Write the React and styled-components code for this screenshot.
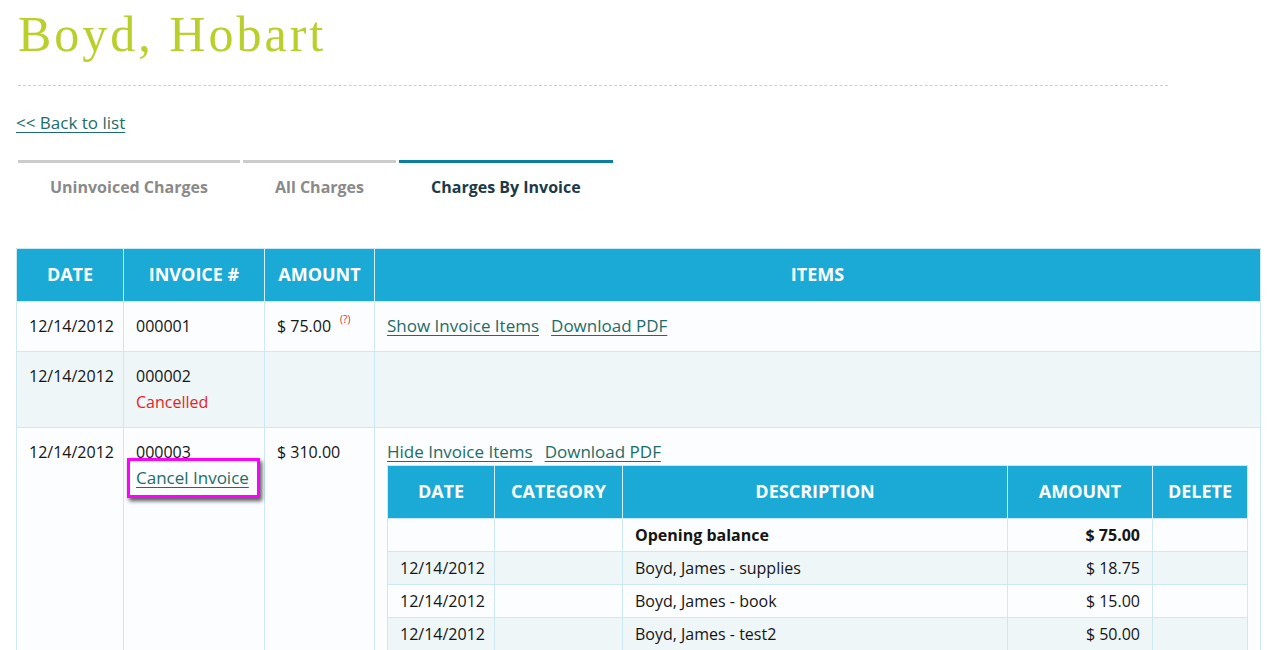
import React from 'react'
import styled, {createGlobalStyle} from 'styled-components'

const GlobalStyle = createGlobalStyle`
  html {
    overflow: hidden;
  }
  body {
    margin: 0;
    background: #fff;
    font-family: "Open Sans", Lato, sans-serif;
    color: #151515;
  }
`

const Page = styled.div`
  padding: 0 16px;
`

const Title = styled.h1`
  margin: 4px 0 0 2px;
  font-family: "Liberation Serif", serif;
  font-weight: 400;
  font-size: 50px;
  letter-spacing: 3px;
  line-height: 60px;
  color: #b9cf2a;
`

const Divider = styled.hr`
  width: 1150px;
  margin: 21px 0 0 2px;
  border: 0;
  border-top: 1px dashed #cfcfcf;
`

const Link = styled.a`
  color: #1d6c68;
  font-size: 17px;
  text-decoration: underline;
  text-underline-offset: 3px;
  cursor: pointer;
`

const BackLink = styled(Link)`
  display: inline-block;
  margin-top: 27px;
  line-height: 20px;
`

const Tabs = styled.ul`
  display: flex;
  gap: 3px;
  list-style: none;
  margin: 26px 0 0 2px;
  padding: 0;
`

const Tab = styled.li`
  padding: 14px 32px;
  border-top: 3px solid ${props => props.active ? '#0b7ea3' : '#cccccc'};
  font-size: 16px;
  font-weight: 700;
  line-height: 20px;
  color: ${props => props.active ? '#1b3a48' : '#8a8a8a'};
`

const Table = styled.table`
  width: ${props => props.nested ? '100%' : '1245px'};
  margin-top: ${props => props.nested ? '0' : '37px'};
  border-collapse: collapse;
  border: 1px solid #cde8f0;
  table-layout: fixed;
`

const Th = styled.th`
  padding: 12px 6px 14px;
  background: #1baad6;
  color: #fff;
  font-size: 18px;
  font-weight: 700;
  line-height: 26px;
  text-align: center;
  text-transform: uppercase;
  white-space: nowrap;
  border-left: 1px solid #d4eef7;
  &:first-child {
    border-left: 0;
  }
`

const Row = styled.tr`
  background: ${props => props.alt ? '#eef6f8' : '#fbfdfe'};
`

const Td = styled.td`
  padding: ${props => props.compact ? '3px 12px' : '11px 12px 12px'};
  border: 1px solid #cde8f0;
  font-size: 16px;
  line-height: 26px;
  vertical-align: top;
  text-align: ${props => props.right ? 'right' : 'left'};
  font-weight: ${props => props.bold ? 700 : 400};
`

const Help = styled.sup`
  position: relative;
  top: -3px;
  margin-left: 9px;
  color: #e3262b;
  font-size: 10px;
  line-height: 0;
`

const Status = styled.div`
  color: #ec1c24;
`

const Actions = styled.div`
  display: flex;
  gap: 12px;
`

const Highlight = styled.span`
  position: relative;
  &::after {
    content: '';
    position: absolute;
    inset: -9px -11px -9px -9px;
    border: 3px solid #ff00ff;
    box-shadow: 2px 3px 4px rgba(0, 0, 0, 0.65);
    pointer-events: none;
  }
`

const items = [
  {date: '', desc: 'Opening balance', amount: '$ 75.00', bold: true},
  {date: '12/14/2012', desc: 'Boyd, James - supplies', amount: '$ 18.75'},
  {date: '12/14/2012', desc: 'Boyd, James - book', amount: '$ 15.00'},
  {date: '12/14/2012', desc: 'Boyd, James - test2', amount: '$ 50.00'},
]

const InvoiceItems = () => (
  <Table nested>
    <colgroup>
      <col style={{width: 107}} />
      <col style={{width: 128}} />
      <col />
      <col style={{width: 145}} />
      <col style={{width: 95}} />
    </colgroup>
    <thead>
      <tr>
        <Th>Date</Th>
        <Th>Category</Th>
        <Th>Description</Th>
        <Th>Amount</Th>
        <Th>Delete</Th>
      </tr>
    </thead>
    <tbody>
      {items.map((item, index) => (
        <Row key={index} alt={index % 2 === 1}>
          <Td compact>{item.date}</Td>
          <Td compact></Td>
          <Td compact bold={item.bold}>{item.desc}</Td>
          <Td compact right bold={item.bold}>{item.amount}</Td>
          <Td compact></Td>
        </Row>
      ))}
    </tbody>
  </Table>
)

export default function App() {
  return (
    <Page>
      <GlobalStyle />
      <Title>Boyd, Hobart</Title>
      <Divider />
      <BackLink>&lt;&lt; Back to list</BackLink>
      <Tabs>
        <Tab>Uninvoiced Charges</Tab>
        <Tab>All Charges</Tab>
        <Tab active>Charges By Invoice</Tab>
      </Tabs>
      <Table>
        <colgroup>
          <col style={{width: 107}} />
          <col style={{width: 141}} />
          <col style={{width: 110}} />
          <col />
        </colgroup>
        <thead>
          <tr>
            <Th>Date</Th>
            <Th>Invoice #</Th>
            <Th>Amount</Th>
            <Th>Items</Th>
          </tr>
        </thead>
        <tbody>
          <Row>
            <Td>12/14/2012</Td>
            <Td>000001</Td>
            <Td>$ 75.00<Help>(?)</Help></Td>
            <Td>
              <Actions>
                <Link>Show Invoice Items</Link>
                <Link>Download PDF</Link>
              </Actions>
            </Td>
          </Row>
          <Row alt>
            <Td>12/14/2012</Td>
            <Td>
              000002
              <Status>Cancelled</Status>
            </Td>
            <Td></Td>
            <Td></Td>
          </Row>
          <Row>
            <Td>12/14/2012</Td>
            <Td>
              000003
              <div>
                <Highlight><Link>Cancel Invoice</Link></Highlight>
              </div>
            </Td>
            <Td>$ 310.00</Td>
            <Td>
              <Actions>
                <Link>Hide Invoice Items</Link>
                <Link>Download PDF</Link>
              </Actions>
              <InvoiceItems />
            </Td>
          </Row>
        </tbody>
      </Table>
    </Page>
  )
}
